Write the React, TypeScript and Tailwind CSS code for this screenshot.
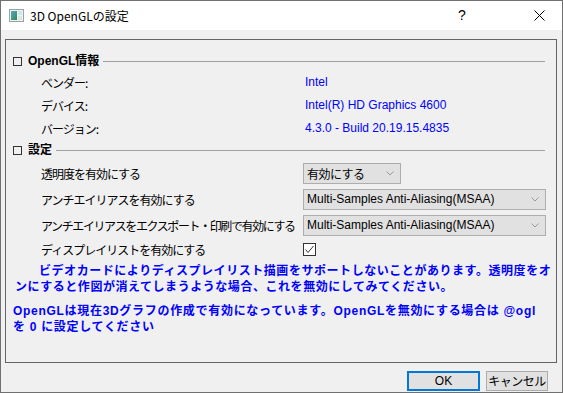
import React from 'react';

// fonts
const jp = "font-['Noto_Sans_CJK_JP',sans-serif]";
const latin = "font-['Liberation_Sans','Noto_Sans_CJK_JP',sans-serif]";

function Chevron() {
  return (
    <svg width="8" height="5" viewBox="0 0 8 5" className="shrink-0">
      <polyline points="0.5,0.5 4,4 7.5,0.5" fill="none" stroke="#9a9a9a" strokeWidth="1" />
    </svg>
  );
}

function Select({ value, wide, isLatin }: { value: string; wide?: boolean; isLatin?: boolean }) {
  return (
    <div
      className={`h-[21px] ${wide ? 'w-[243px]' : 'w-[98px]'} bg-[#e1e1e1] border border-[#adadad] flex items-center pl-[3px] pr-[6px]`}
    >
      <span
        className={`flex-1 text-[12px] leading-[19px] text-black whitespace-nowrap ${isLatin ? latin : jp + ' tracking-[-0.5px]'}`}
      >
        {value}
      </span>
      <Chevron />
    </div>
  );
}

function GroupHeader({ title }: { title: string }) {
  return (
    <div className="h-[20px] flex items-center pl-[7px] pr-[11px]">
      <div className="w-[9px] h-[9px] border border-[#333333] bg-[#f0f0f0] shrink-0" />
      <span className={`ml-[6px] text-[12px] font-bold leading-[20px] text-black whitespace-nowrap ${latin}`}>{title}</span>
      <div className="ml-[4px] flex-1 h-px bg-[#a0a0a0]" />
    </div>
  );
}

function InfoRow({ label, value }: { label: string; value: string }) {
  return (
    <div className="h-[23px] flex items-center pl-[35px]">
      <span className={`w-[264px] text-[12px] leading-[23px] text-black tracking-[-1px] whitespace-nowrap ${jp}`}>{label}</span>
      <span className={`text-[12px] leading-[23px] text-[#0000ff] whitespace-nowrap ${latin}`}>{value}</span>
    </div>
  );
}

function SettingRow({
  label,
  children,
  className,
  tight,
}: {
  label: string;
  children: React.ReactNode;
  className?: string;
  tight?: boolean;
}) {
  return (
    <div className={`flex items-center pl-[35px] ${className ?? ''}`}>
      <span
        className={`w-[262px] text-[12px] leading-[21px] text-black whitespace-nowrap ${jp} ${tight ? 'tracking-[-1.4px]' : 'tracking-[-1px]'}`}
      >
        {label}
      </span>
      {children}
    </div>
  );
}

export default function App() {
  return (
    <div className="w-[563px] h-[393px] bg-[#f0f0f0] border border-[#707070] flex flex-col overflow-hidden">
      {/* title bar */}
      <div className="h-[29px] bg-white flex items-center shrink-0">
        <svg width="15" height="13" viewBox="0 0 15 13" className="ml-[8px] shrink-0">
          <defs>
            <linearGradient id="ic" x1="0" y1="0" x2="1" y2="1">
              <stop offset="0" stopColor="#5aa7c9" />
              <stop offset="1" stopColor="#2f8a4e" />
            </linearGradient>
          </defs>
          <rect x="0.5" y="0.5" width="14" height="12" fill="#eef2f3" stroke="#9aa0a4" />
          <rect x="2" y="2" width="6" height="9" fill="url(#ic)" />
          <rect x="9" y="2" width="4" height="4" fill="#cfe6ee" />
          <rect x="9" y="7" width="4" height="4" fill="#dde7df" />
        </svg>
        <span className={`ml-[6px] text-[12px] leading-[29px] text-black whitespace-nowrap ${jp}`}>3D OpenGLの設定</span>
        <div className="flex-1" />
        <div className={`w-[46px] h-[29px] flex items-center justify-center text-[14px] text-black ${latin}`}>?</div>
        <div className="w-[31px]" />
        <div className="w-[46px] h-[29px] flex items-center justify-center">
          <svg width="11" height="11" viewBox="0 0 11 11">
            <path d="M0.5 0.5 L10.5 10.5 M10.5 0.5 L0.5 10.5" stroke="#000" strokeWidth="1" />
          </svg>
        </div>
      </div>

      {/* body */}
      <div className="flex-1 flex flex-col pl-[4px] pr-[5px] pt-[9px]">
        <div className="h-[324px] border border-[#646464] flex flex-col">
          <div className="mt-[11px]">
            <GroupHeader title="OpenGL情報" />
          </div>
          <InfoRow label="ベンダー:" value="Intel" />
          <InfoRow label="デバイス:" value="Intel(R) HD Graphics 4600" />
          <InfoRow label="バージョン:" value="4.3.0 - Build 20.19.15.4835" />
          <GroupHeader title="設定" />

          <SettingRow label="透明度を有効にする" className="mt-[3px] h-[21px]">
            <Select value="有効にする" />
          </SettingRow>
          <SettingRow label="アンチエイリアスを有効にする" className="mt-[5px] h-[21px]">
            <Select value="Multi-Samples Anti-Aliasing(MSAA)" wide isLatin />
          </SettingRow>
          <SettingRow label="アンチエイリアスをエクスポート・印刷で有効にする" className="mt-[5px] h-[21px]" tight>
            <Select value="Multi-Samples Anti-Aliasing(MSAA)" wide isLatin />
          </SettingRow>
          <SettingRow label="ディスプレイリストを有効にする" className="mt-[5px] h-[16px]">
            <div className="w-[13px] h-[13px] border border-[#333333] bg-white flex items-center justify-center">
              <svg width="11" height="11" viewBox="0 0 11 11">
                <polyline points="1.5,5.5 4,8.5 9.5,2" fill="none" stroke="#333" strokeWidth="1" />
              </svg>
            </div>
          </SettingRow>

          <div className={`mt-[5px] text-[12px] leading-[16px] font-bold text-[#0000ff] tracking-[0.55px] whitespace-nowrap ${jp}`}>
            <div className="pl-[33px]">ビデオカードによりディスプレイリスト描画をサポートしないことがあります。透明度をオ</div>
            <div className="pl-[9px]">ンにすると作図が消えてしまうような場合、これを無効にしてみてください。</div>
          </div>

          <div className={`mt-[9px] pl-[7px] text-[12px] leading-[16px] font-bold text-[#0000ff] tracking-[0.7px] whitespace-nowrap ${latin}`}>
            <div>OpenGLは現在3Dグラフの作成で有効になっています。OpenGLを無効にする場合は @ogl</div>
            <div>を 0 に設定してください</div>
          </div>
        </div>

        {/* buttons */}
        <div className="mt-[8px] flex justify-end gap-[6px] pr-[9px]">
          <button className={`w-[73px] h-[20px] bg-[#e1e1e1] border-2 border-[#0078d7] text-[12px] leading-[16px] text-black ${latin}`}>
            OK
          </button>
          <button className={`w-[62px] h-[20px] bg-[#e1e1e1] border border-[#adadad] text-[12px] leading-[18px] text-black tracking-[-0.5px] ${jp}`}>
            キャンセル
          </button>
        </div>
      </div>
    </div>
  );
}
